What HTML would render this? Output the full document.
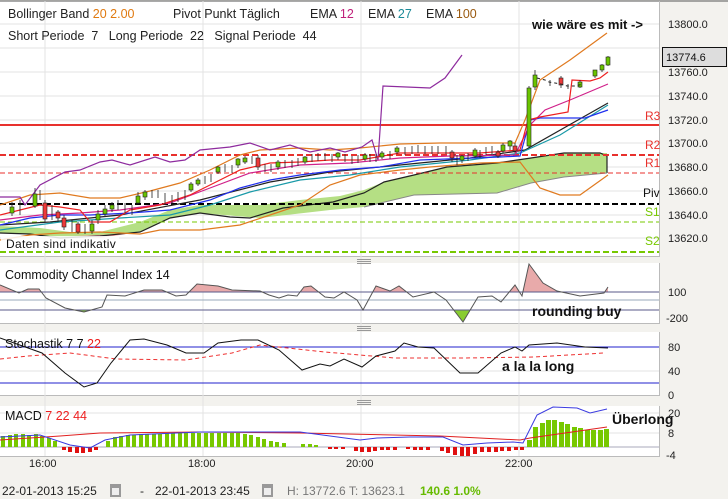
<!DOCTYPE html>
<html><head><meta charset="utf-8"><style>
body{margin:0;width:728px;height:499px;overflow:hidden;background:#f3f2ee;font-family:"Liberation Sans",sans-serif}
svg{display:block}
</style></head><body>
<svg width="728" height="499" viewBox="0 0 728 499" xmlns="http://www.w3.org/2000/svg" font-family="Liberation Sans, sans-serif">
<defs>
<clipPath id="above"><rect x="0" y="262" width="660" height="30"/></clipPath>
<clipPath id="below"><rect x="0" y="310" width="660" height="14"/></clipPath>
</defs>
<rect x="0" y="0" width="728" height="499" fill="#f3f2ee"/>
<!-- panels -->
<rect x="0" y="1" width="659" height="255" fill="#fff"/>
<rect x="0" y="263" width="659" height="60" fill="#fff"/>
<rect x="0" y="332" width="659" height="63" fill="#fff"/>
<rect x="0" y="406" width="659" height="50" fill="#fff"/>
<line x1="0" y1="1" x2="728" y2="1" stroke="#555"/>
<g stroke="#bbb"><line x1="659.5" y1="1" x2="659.5" y2="256"/><line x1="659.5" y1="263" x2="659.5" y2="323"/><line x1="659.5" y1="332" x2="659.5" y2="395"/><line x1="659.5" y1="406" x2="659.5" y2="456"/>
<line x1="0" y1="256.5" x2="660" y2="256.5"/><line x1="0" y1="323.5" x2="660" y2="323.5"/><line x1="0" y1="395.5" x2="660" y2="395.5"/><line x1="0" y1="456.5" x2="660" y2="456.5"/></g>
<!-- grid -->
<g stroke="#e3e3e3">
<line x1="45" y1="1" x2="45" y2="456"/><line x1="203" y1="1" x2="203" y2="456"/><line x1="361" y1="1" x2="361" y2="456"/><line x1="519" y1="1" x2="519" y2="456"/>
<line x1="0" y1="24" x2="659" y2="24"/><line x1="0" y1="48" x2="659" y2="48"/><line x1="0" y1="72" x2="659" y2="72"/><line x1="0" y1="96" x2="659" y2="96"/><line x1="0" y1="120" x2="659" y2="120"/><line x1="0" y1="143" x2="659" y2="143"/><line x1="0" y1="167" x2="659" y2="167"/><line x1="0" y1="191" x2="659" y2="191"/><line x1="0" y1="215" x2="659" y2="215"/><line x1="0" y1="238" x2="659" y2="238"/>
<line x1="0" y1="371" x2="659" y2="371"/><line x1="0" y1="413" x2="659" y2="413"/><line x1="0" y1="433" x2="659" y2="433"/>
</g>
<g stroke="#9ab" ><line x1="0" y1="300" x2="659" y2="300"/></g>
<!-- handles -->
<g stroke="#999"><path d="M357 259.5h14M357 261.5h14M357 263.5h14"/><path d="M357 326.5h14M357 328.5h14M357 330.5h14"/><path d="M357 400.5h14M357 402.5h14M357 404.5h14"/></g>
<!-- cloud -->
<polygon fill="#b5df84" points="0,226 40,228 70,232 100,232 140,222 170,210 200,205 260,205 300,200 340,196 364,190 384,182 414,175 447,167 497,163 531,158 564,153 607,153 607,173 564,177 531,183 497,193 414,195 364,207 330,210 260,218 200,213 170,218 140,232 100,236 60,238 30,234 0,233"/>
<polygon fill="#f4a0a0" points="75,236 120,234 140,232 100,238"/>
<polyline fill="none" stroke="#222" stroke-width="1.2" points="0,233 30,234 60,238 100,236 140,232 170,218 200,213 230,217 250,218 283,208 333,202 364,193 384,182 414,175 447,167 497,163 531,158 564,153 600,153 607,156 607,173"/>
<polyline fill="none" stroke="#888" points="364,207 414,195 497,193 531,183 564,177 607,173"/>
<!-- pivot lines -->
<line x1="0" y1="125" x2="659" y2="125" stroke="#e8312d" stroke-width="2"/>
<line x1="0" y1="155" x2="659" y2="155" stroke="#e8312d" stroke-width="2" stroke-dasharray="6,3"/>
<line x1="0" y1="173" x2="659" y2="173" stroke="#e8312d" stroke-dasharray="5,3"/>
<line x1="0" y1="204" x2="659" y2="204" stroke="#000" stroke-width="2" stroke-dasharray="6,3"/>
<line x1="0" y1="222" x2="659" y2="222" stroke="#77c800" stroke-dasharray="5,3"/>
<line x1="0" y1="252" x2="659" y2="252" stroke="#77c800" stroke-width="2" stroke-dasharray="6,3"/>
<!-- lines -->
<g fill="none" stroke-width="1.2">
<polyline stroke="#e07a20" points="0,240 30,235 60,233 100,232 140,234 160,230 200,230 240,225 270,215 300,205 330,185 360,175 400,170 430,167 480,163 520,162 530,175 540,188 560,195 580,195 608,175"/>
<polyline stroke="#e07a20" points="0,205 30,195 60,193 90,198 120,198 150,191 180,183 210,170 240,155 260,150 300,148 330,150 360,148 400,144 440,143 515,143 525,120 540,80 570,60 607,33"/>
<polyline stroke="#8e2b9e" points="0,197 20,197 25,205 40,185 65,172 80,170 100,162 112,160 130,165 155,157 170,162 185,160 200,150 230,147 250,143 270,150 290,145 310,152 330,148 345,152 362,147 372,140 378,160 383,86 430,88 445,78 462,55"/>
<polyline stroke="#222" points="0,225 50,222 120,215 200,200 270,182 330,172 400,165 470,158 525,150 608,103"/>
<polyline stroke="#1a9aa8" points="0,230 60,222 120,218 170,215 210,205 250,192 300,180 350,175 400,167 470,160 520,153 560,135 608,105"/>
<polyline stroke="#2030ee" points="0,225 30,218 60,215 90,215 130,213 170,210 210,200 240,188 270,180 300,175 340,170 380,167 420,160 500,157 520,156 530,120 540,118 585,118 608,110"/>
<polyline stroke="#d0208a" points="0,220 40,215 80,213 120,210 170,203 210,188 250,173 300,165 350,163 400,158 450,156 515,155 530,125 545,110 570,100 608,84"/>
<polyline stroke="#ee2020" points="0,215 40,205 60,207 80,210 90,222 110,222 130,210 160,205 190,195 220,180 240,170 270,163 300,162 330,160 360,160 400,153 440,153 480,153 520,150 528,120 540,117 568,112 572,80 590,81 600,78 608,72"/>
</g>
<!-- candles -->
<g stroke="#222" stroke-width="0.8">
<path d="M12 202v14M20 200v15M35 188v20M40 190v10M45 200v22M52 205v15M58 210v12M64 215v15M72 220v12M78 222v12M85 224v10M92 220v14M98 210v14M105 205v12M112 202v10M118 200v10M125 203v10M132 205v10M138 192v12M145 190v10M152 190v8M158 190v8M165 193v12M172 195v10M178 192v10M185 190v10M191 182v10M198 178v8M205 176v8M211 174v8M218 166v8M225 164v8M232 165v8M238 158v10M245 156v8M252 156v8M258 155v15M265 164v8M271 164v8M278 160v10M285 160v8M292 160v8M298 158v8M305 156v8M312 154v8M318 153v8M325 153v8M332 154v8M338 152v8M345 154v8M352 156v8M358 155v8M365 153v8M370 154v8M376 154v8M382 151v8M390 151v8M397 146v8M405 147v8M412 146v8M418 145v8M425 146v8M432 146v8M438 146v8M446 146v8M452 150v12M457 155v10M462 155v8M468 153v8M475 148v10M480 150v8M486 147v8M492 146v8M498 150v8M503 143v10M510 140v10M515 143v10M529 86v62M535 70v20M550 80v6M561 76v12M568 84v5M580 80v8M595 70v8M602 64v8M608 56v10"/>
</g>
<g stroke="#222" stroke-width="0.6">
<g fill="#6ac400">
<rect x="10" y="207" width="4" height="6"/><rect x="33" y="194" width="4" height="12"/><rect x="90" y="224" width="4" height="7"/><rect x="96" y="214" width="4" height="6"/><rect x="103" y="209" width="4" height="5"/><rect x="110" y="205" width="4" height="4"/><rect x="136" y="196" width="4" height="7"/><rect x="143" y="192" width="4" height="5"/><rect x="189" y="184" width="4" height="6"/><rect x="196" y="180" width="4" height="4"/><rect x="216" y="167" width="4" height="5"/><rect x="236" y="159" width="4" height="6"/><rect x="243" y="158" width="4" height="4"/><rect x="276" y="162" width="4" height="5"/><rect x="303" y="157" width="4" height="5"/><rect x="336" y="153" width="4" height="4"/><rect x="363" y="155" width="4" height="4"/><rect x="380" y="153" width="4" height="4"/><rect x="395" y="148" width="4" height="4"/><rect x="460" y="156" width="4" height="4"/><rect x="473" y="150" width="4" height="6"/><rect x="501" y="145" width="4" height="6"/><rect x="508" y="141" width="4" height="5"/><rect x="527" y="88" width="4" height="58"/><rect x="533" y="75" width="4" height="12"/><rect x="578" y="82" width="4" height="5"/><rect x="593" y="70" width="4" height="6"/><rect x="600" y="65" width="4" height="5"/><rect x="606" y="57" width="4" height="8"/>
</g>
<g fill="#ee3a3a">
<rect x="43" y="203" width="4" height="16"/><rect x="56" y="212" width="4" height="6"/><rect x="62" y="218" width="4" height="9"/><rect x="76" y="224" width="4" height="8"/><rect x="256" y="158" width="4" height="9"/><rect x="450" y="152" width="4" height="6"/><rect x="496" y="152" width="4" height="4"/><rect x="513" y="146" width="4" height="5"/><rect x="559" y="78" width="4" height="7"/>
</g>
</g>
<path d="M537 78l8 2 4 2 6 1 6 1 6 2 8 0 8 -2" stroke="#222" fill="none" stroke-dasharray="3,3"/>
<!-- header text -->
<g font-size="12.5" fill="#222">
<text x="8" y="18">Bollinger Band <tspan fill="#e07a10">20  2.00</tspan></text>
<text x="173" y="18">Pivot Punkt  Täglich</text>
<text x="310" y="18">EMA <tspan fill="#c0207a">12</tspan></text>
<text x="368" y="18">EMA <tspan fill="#1a8a98">27</tspan></text>
<text x="426" y="18">EMA <tspan fill="#9a5a10">100</tspan></text>
<text x="8" y="40" xml:space="preserve">Short Periode  7   Long Periode  22   Signal Periode  44</text>
</g>
<text x="532" y="29" font-size="13" font-weight="bold" fill="#111">wie wäre es mit  -&gt;</text>
<g font-size="12">
<text x="645" y="120" fill="#e8312d">R3</text><text x="645" y="149" fill="#e8312d">R2</text><text x="645" y="167" fill="#e8312d">R1</text>
<text x="643" y="197" fill="#111">Piv</text><text x="645" y="216" fill="#77c800">S1</text><text x="645" y="245" fill="#77c800">S2</text>
</g>
<rect x="1" y="236" width="118" height="15" fill="#fff" opacity="0.85"/>
<text x="6" y="248" font-size="12" fill="#111" letter-spacing="0.3">Daten sind indikativ</text>
<!-- right axis -->
<g font-size="11" fill="#222">
<text x="668" y="28">13800.0</text><text x="668" y="76">13760.0</text><text x="668" y="100">13740.0</text><text x="668" y="124">13720.0</text><text x="668" y="147">13700.0</text><text x="668" y="171">13680.0</text><text x="668" y="195">13660.0</text><text x="668" y="219">13640.0</text><text x="668" y="242">13620.0</text>
<text x="668" y="296">100</text><text x="666" y="322">-200</text>
<text x="668" y="351">80</text><text x="668" y="375">40</text><text x="668" y="399">0</text>
<text x="668" y="417">20</text><text x="668" y="437">8</text><text x="666" y="459">-4</text>
</g>
<rect x="662.5" y="47.5" width="64" height="19" fill="#ddd" stroke="#111"/>
<text x="666" y="61" font-size="11" fill="#111">13774.6</text>
<!-- CCI -->
<polygon clip-path="url(#above)" fill="#e8aaaa" points="0,292 0,285 19,293 28,289 39,289 46,298 65,308 84,312 102,307 107,295 125,296 144,290 162,290 176,296 186,295 197,284 218,286 232,290 260,291 269,295 279,298 288,295 297,296 304,287 311,286 325,297 334,298 344,292 357,300 363,310 376,286 390,291 399,286 413,297 434,292 446,300 463,322 478,297 492,296 501,302 515,285 522,296 529,264 543,283 557,291 580,296 604,293 608,287 608,292"/>
<polygon clip-path="url(#below)" fill="#88cc30" points="0,310 65,308 84,312 102,307 363,310 446,300 463,322 478,297 608,310"/>
<line x1="0" y1="292" x2="659" y2="292" stroke="#5a5a8a"/>
<line x1="0" y1="310" x2="659" y2="310" stroke="#5a5a8a"/>
<polyline fill="none" stroke="#555" points="0,285 19,293 28,289 39,289 46,298 65,308 84,312 102,307 107,295 125,296 144,290 162,290 176,296 186,295 197,284 218,286 232,290 260,291 269,295 279,298 288,295 297,296 304,287 311,286 325,297 334,298 344,292 357,300 363,310 376,286 390,291 399,286 413,297 434,292 446,300 463,322 478,297 492,296 501,302 515,285 522,296 529,264 543,283 557,291 580,296 604,293 608,287"/>
<text x="5" y="279" font-size="12.5" fill="#111">Commodity Channel Index  14</text>
<text x="532" y="316" font-size="14" font-weight="bold" fill="#111">rounding buy</text>
<!-- Stoch -->
<line x1="0" y1="347" x2="659" y2="347" stroke="#2020cc"/>
<line x1="0" y1="383" x2="659" y2="383" stroke="#2020cc"/>
<polyline fill="none" stroke="#ee3030" stroke-dasharray="4,3" points="0,359 28,356 70,353 116,359 186,360 232,353 260,345 325,352 395,358 464,358 534,357 604,353"/>
<polyline fill="none" stroke="#111" points="0,338 42,353 65,373 84,387 97,383 111,363 130,340 144,339 167,345 186,353 204,353 218,343 241,340 258,340 279,350 302,370 320,364 330,366 344,359 362,367 376,356 395,351 404,343 418,347 434,348 460,373 478,373 501,353 515,347 522,351 529,345 557,343 585,347 608,348"/>
<text x="5" y="348" font-size="12.5" fill="#111">Stochastik  7  7  <tspan fill="#ee2020">22</tspan></text>
<text x="502" y="371" font-size="14" font-weight="bold" fill="#111">a la la long</text>
<!-- MACD -->
<line x1="0" y1="447" x2="659" y2="447" stroke="#aab"/>
<g fill="#77c800">
<rect x="1" y="436" width="4" height="11"/><rect x="8" y="435" width="4" height="12"/><rect x="14" y="434" width="4" height="13"/><rect x="21" y="434" width="4" height="13"/><rect x="27" y="435" width="4" height="12"/><rect x="34" y="434" width="4" height="13"/><rect x="40" y="436" width="4" height="11"/><rect x="47" y="438" width="4" height="9"/><rect x="53" y="441" width="4" height="6"/>
<rect x="106" y="441" width="4" height="6"/><rect x="113" y="437" width="4" height="10"/><rect x="119" y="436" width="4" height="11"/><rect x="126" y="435" width="4" height="12"/><rect x="132" y="435" width="4" height="12"/><rect x="139" y="434" width="4" height="13"/><rect x="145" y="434" width="4" height="13"/><rect x="152" y="434" width="4" height="13"/><rect x="158" y="434" width="4" height="13"/><rect x="165" y="433" width="4" height="14"/><rect x="171" y="433" width="4" height="14"/><rect x="178" y="433" width="4" height="14"/><rect x="184" y="433" width="4" height="14"/><rect x="191" y="433" width="4" height="14"/><rect x="197" y="433" width="4" height="14"/><rect x="204" y="433" width="4" height="14"/><rect x="210" y="433" width="4" height="14"/><rect x="217" y="433" width="4" height="14"/><rect x="223" y="433" width="4" height="14"/><rect x="230" y="433" width="4" height="14"/><rect x="236" y="433" width="4" height="14"/><rect x="243" y="434" width="4" height="13"/><rect x="249" y="435" width="4" height="12"/><rect x="256" y="437" width="4" height="10"/><rect x="262" y="439" width="4" height="8"/><rect x="269" y="441" width="4" height="6"/><rect x="275" y="442" width="4" height="5"/><rect x="282" y="443" width="4" height="4"/><rect x="301" y="444" width="4" height="3"/><rect x="308" y="444" width="4" height="3"/><rect x="314" y="445" width="4" height="2"/>
<rect x="527" y="440" width="5" height="7"/><rect x="533" y="427" width="5" height="20"/><rect x="540" y="423" width="5" height="24"/><rect x="546" y="420" width="5" height="27"/><rect x="552" y="420" width="5" height="27"/><rect x="559" y="422" width="5" height="25"/><rect x="565" y="424" width="5" height="23"/><rect x="572" y="427" width="5" height="20"/><rect x="578" y="428" width="5" height="19"/><rect x="585" y="430" width="5" height="17"/><rect x="591" y="430" width="5" height="17"/><rect x="598" y="430" width="5" height="17"/><rect x="604" y="429" width="5" height="18"/>
</g>
<g fill="#e01010">
<rect x="62" y="447" width="4" height="3"/><rect x="68" y="447" width="4" height="5"/><rect x="75" y="447" width="4" height="6"/><rect x="81" y="447" width="4" height="6"/><rect x="88" y="447" width="4" height="5"/><rect x="94" y="447" width="4" height="3"/>
<rect x="328" y="447" width="4" height="2"/><rect x="334" y="447" width="4" height="2"/><rect x="341" y="447" width="4" height="2"/><rect x="354" y="447" width="4" height="4"/><rect x="360" y="447" width="4" height="5"/><rect x="367" y="447" width="4" height="5"/><rect x="373" y="447" width="4" height="4"/><rect x="380" y="447" width="4" height="3"/><rect x="386" y="447" width="4" height="3"/><rect x="393" y="447" width="4" height="3"/><rect x="406" y="447" width="4" height="2"/><rect x="413" y="447" width="4" height="3"/><rect x="419" y="447" width="4" height="3"/><rect x="426" y="447" width="4" height="3"/><rect x="440" y="447" width="4" height="4"/><rect x="446" y="447" width="4" height="6"/><rect x="453" y="447" width="4" height="8"/><rect x="460" y="447" width="4" height="9"/><rect x="466" y="447" width="4" height="9"/><rect x="473" y="447" width="4" height="7"/><rect x="480" y="447" width="4" height="5"/><rect x="487" y="447" width="4" height="5"/><rect x="494" y="447" width="4" height="5"/><rect x="500" y="447" width="4" height="4"/><rect x="507" y="447" width="4" height="4"/><rect x="514" y="447" width="4" height="3"/><rect x="520" y="447" width="4" height="3"/>
</g>
<polyline fill="none" stroke="#e02020" points="0,440 60,436 100,433 200,432 300,433 440,436 520,440 530,438 607,427"/>
<polyline fill="none" stroke="#3a3ae0" points="0,437 40,435 70,445 90,448 105,440 130,435 200,432 300,432 360,440 377,438 410,437 443,437 463,445 487,443 513,442 523,443 537,415 553,407 577,408 590,413 607,409"/>
<text x="5" y="420" font-size="12.5" fill="#111">MACD  <tspan fill="#ee2020">7  22  44</tspan></text>
<text x="612" y="424" font-size="14" font-weight="bold" fill="#111">Überlong</text>
<!-- time axis -->
<g font-size="11" fill="#222">
<text x="29" y="467">16:00</text><text x="188" y="467">18:00</text><text x="346" y="467">20:00</text><text x="505" y="467">22:00</text>
</g>
<!-- footer -->
<g font-size="12" fill="#222">
<text x="2" y="495">22-01-2013 15:25</text>
<text x="140" y="495">-</text>
<text x="155" y="495">22-01-2013 23:45</text>
<text x="287" y="495" fill="#777">H: 13772.6  T: 13623.1</text>
<text x="420" y="495" fill="#66bb00" font-weight="bold">140.6  1.0%</text>
</g>
<g fill="#999"><rect x="110" y="484" width="11" height="13"/><rect x="262" y="484" width="11" height="13"/></g>
<g fill="#eee"><rect x="112" y="488" width="7" height="7"/><rect x="264" y="488" width="7" height="7"/></g>
</svg>
</body></html>
